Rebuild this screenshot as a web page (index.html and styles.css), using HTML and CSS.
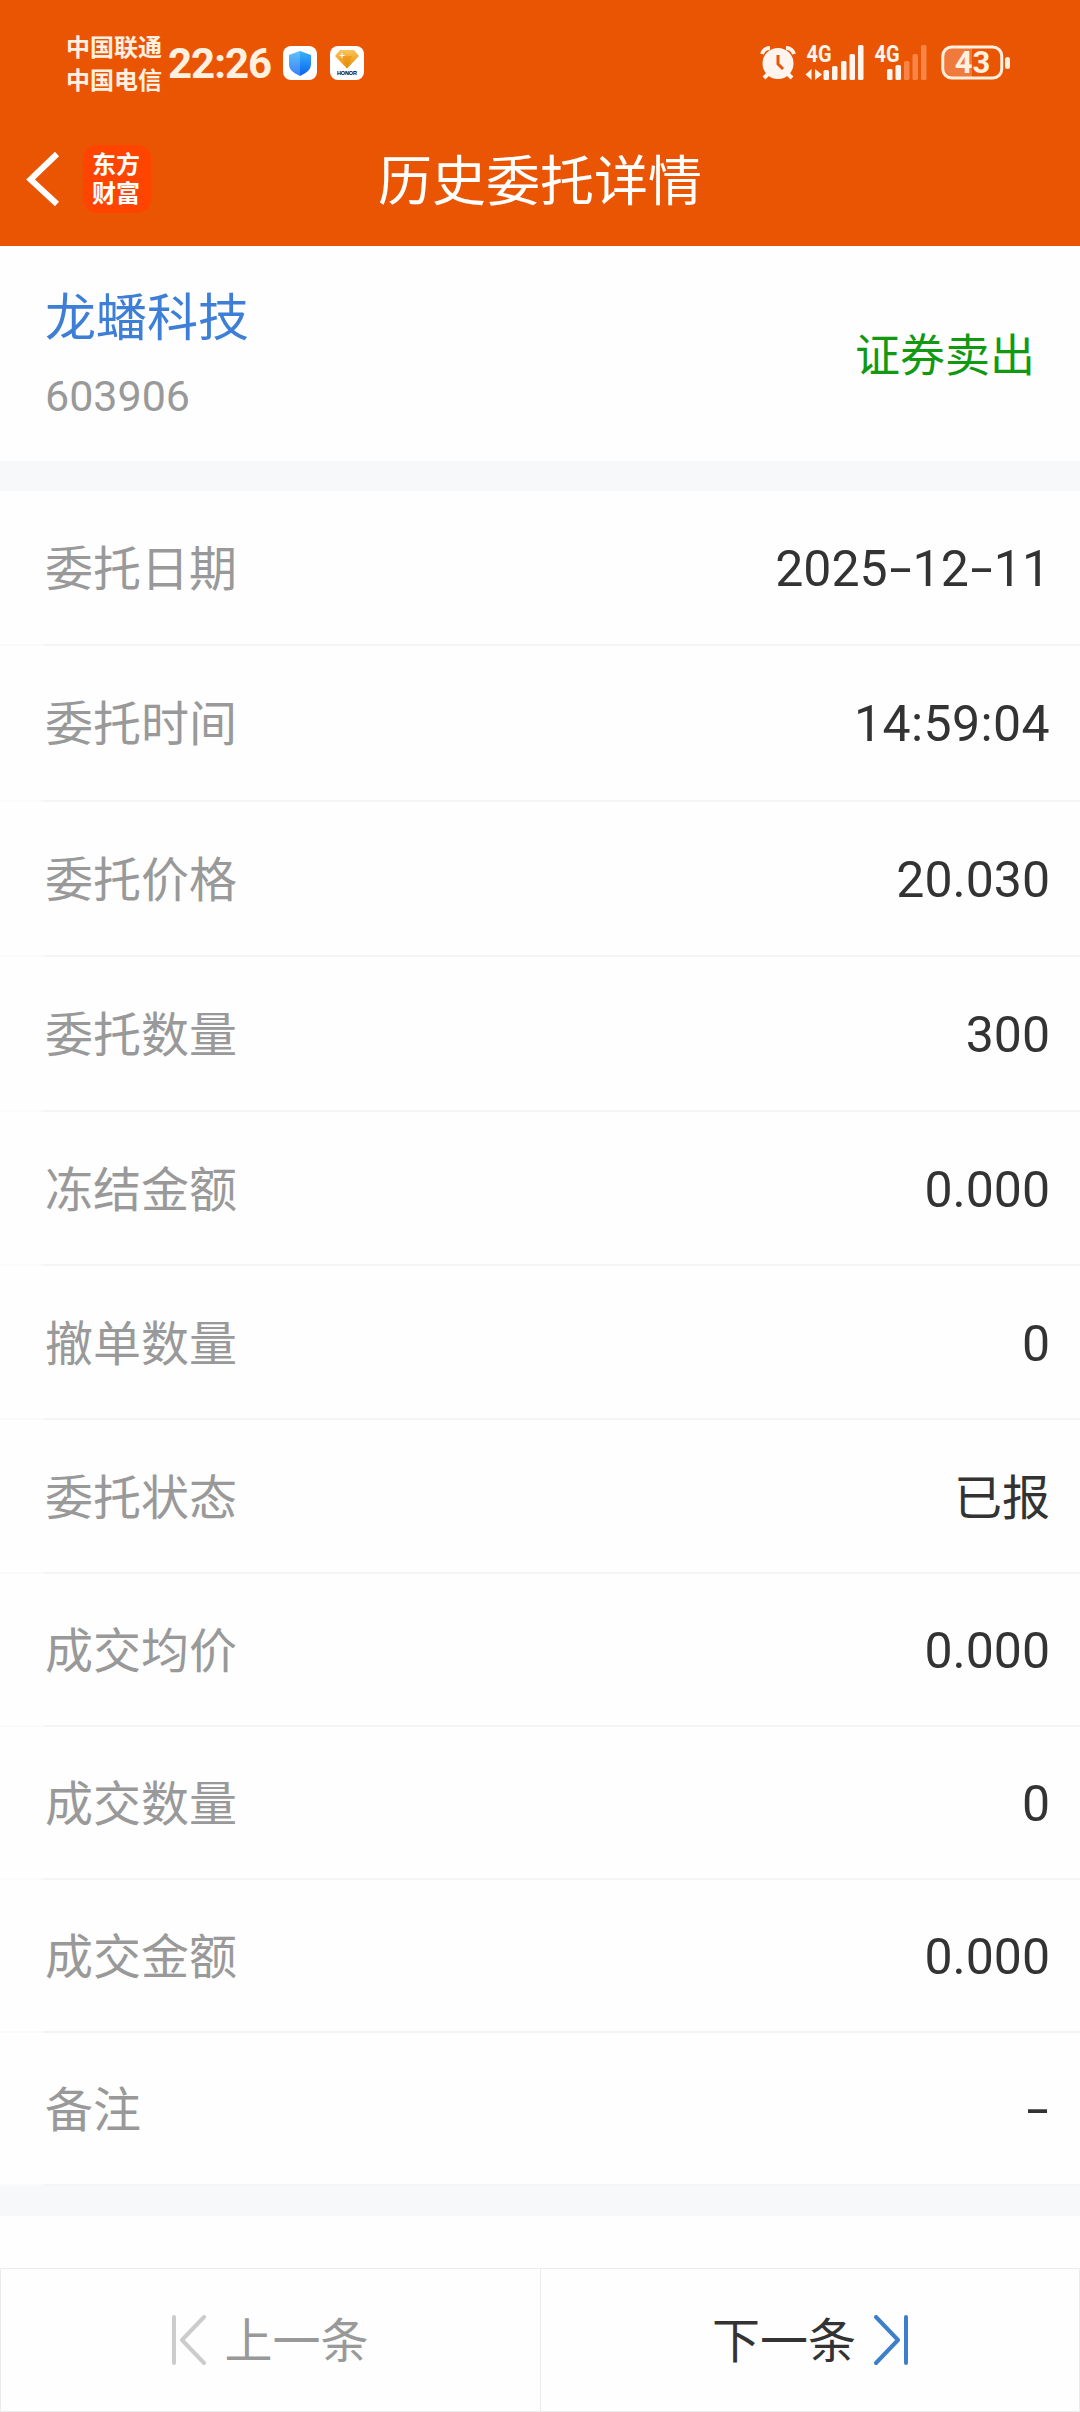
FILE: index.html
```html
<!DOCTYPE html>
<html lang="zh-CN">

<head>
  <meta charset="UTF-8" />
  <meta name="viewport" content="width=device-width, initial-scale=1.0">
  <title>历史委托详情</title>
  <link rel="stylesheet" href="styles.css">
</head>

<body>
  <header class="header">
    <div class="statusbar">
      <div class="carriers">
        <span>中国联通</span>
        <span>中国电信</span>
      </div>
      <span class="clock">22:26</span>
      <svg class="app-icon" viewBox="0 0 34 34">
        <defs>
          <linearGradient id="shield" x1="0" y1="0" x2="0" y2="1">
            <stop offset="0" stop-color="#38b2f8" />
            <stop offset="1" stop-color="#0a62f5" />
          </linearGradient>
        </defs>
        <rect width="34" height="34" rx="8" fill="#fff" />
        <path d="M17 5l11 4v9c0 6-5 9-11 12C11 27 6 24 6 18V9z" fill="url(#shield)" />
        <path d="M17 5v25C11 27 6 24 6 18V9z" fill="#fff" opacity=".2" />
      </svg>
      <svg class="app-icon" viewBox="0 0 34 34">
        <defs>
          <linearGradient id="gem" x1="0" y1="0" x2="0" y2="1">
            <stop offset="0" stop-color="#fbc45a" />
            <stop offset="1" stop-color="#e88a05" />
          </linearGradient>
        </defs>
        <rect width="34" height="34" rx="8" fill="#fff" />
        <path d="M10 4h14l5 6-12 12.500L5 10z" fill="url(#gem)" />
        <path d="M12 10h10l-5 12z" fill="#e88c05" opacity=".5" />
        <path d="M12 7v5M9.500 9.500h5" stroke="#fff" stroke-width="1" />
        <text class="honor" x="17" y="28.500" text-anchor="middle" textLength="20">HONOR</text>
      </svg>
      <div class="status-right">
        <svg class="alarm" viewBox="0 0 36 36">
          <circle cx="18" cy="18.500" r="15.500" fill="#fff5ee" />
          <path d="M2 9a8 8 0 0 1 8-6M34 9a8 8 0 0 0-8-6" fill="none" stroke="#fff5ee" stroke-width="4" />
          <path d="M8 29l-4 4M28 29l4 4" stroke="#fff5ee" stroke-width="4" />
          <path d="M18 10v9l5 5" fill="none" stroke="#ea5504" stroke-width="3" />
        </svg>
        <svg class="signal" viewBox="0 0 60 36">
          <text class="net" x="1.500" y="17" textLength="25" lengthAdjust="spacingAndGlyphs">4G</text>
          <path d="M6.500 24v11l-6-5.500zM10 24v11l7-5.500z" fill="#fff5ee" />
          <g fill="#fff5ee">
            <rect x="18.500" y="25" width="5.500" height="10" rx="1.500" />
            <rect x="27" y="21" width="5.500" height="14" rx="1.500" />
            <rect x="36" y="16" width="5.500" height="19" rx="1.500" />
            <rect x="44.500" y="9" width="5.500" height="26" rx="1.500" />
            <rect x="53" y="0" width="5.500" height="35" rx="1.500" />
          </g>
        </svg>
        <svg class="signal" viewBox="0 0 60 36">
          <text class="net" x="1.500" y="17" textLength="25" lengthAdjust="spacingAndGlyphs">4G</text>
          <g fill="#fff5ee">
            <rect x="14" y="24" width="5.500" height="11" rx="1.500" />
            <rect x="22.500" y="20" width="5.500" height="15" rx="1.500" />
          </g>
          <g fill="#f88446">
            <rect x="31" y="16" width="5.500" height="19" rx="1.500" />
            <rect x="39.500" y="9" width="5.500" height="26" rx="1.500" />
            <rect x="48" y="0" width="5.500" height="35" rx="1.500" />
          </g>
        </svg>
        <svg class="battery" viewBox="0 0 70 36">
          <path d="M31 2H11a9 9 0 0 0-9 9v13a9 9 0 0 0 9 9h20z" fill="#f07a3c" />
          <rect x="1.750" y="2" width="59" height="31" rx="9" fill="none" stroke="#fff0e0" stroke-width="3" />
          <rect x="64" y="12" width="5" height="12" rx="2.500" fill="#fff0e0" />
          <text class="battery-level" x="31.500" y="28" text-anchor="middle">43</text>
        </svg>
      </div>
    </div>
    <div class="titlebar">
      <svg class="back" viewBox="0 0 34 56">
        <path d="M31 3L4.500 28.500L31 53" fill="none" stroke="#fff" stroke-width="6" />
      </svg>
      <div class="logo">东方<br>财富</div>
      <h1>历史委托详情</h1>
    </div>
  </header>

  <section class="stock">
    <div>
      <h2>龙蟠科技</h2>
      <p class="code">603906</p>
    </div>
    <span class="side">证券卖出</span>
  </section>

  <ul class="details">
    <li><span class="label">委托日期</span><span class="value">2025<span class="dash">-</span>12<span class="dash">-</span>11</span></li>
    <li><span class="label">委托时间</span><span class="value time">14:59:04</span></li>
    <li><span class="label">委托价格</span><span class="value">20.030</span></li>
    <li><span class="label">委托数量</span><span class="value">300</span></li>
    <li><span class="label">冻结金额</span><span class="value">0.000</span></li>
    <li><span class="label">撤单数量</span><span class="value">0</span></li>
    <li><span class="label">委托状态</span><span class="value text">已报</span></li>
    <li><span class="label">成交均价</span><span class="value">0.000</span></li>
    <li><span class="label">成交数量</span><span class="value">0</span></li>
    <li><span class="label">成交金额</span><span class="value">0.000</span></li>
    <li><span class="label">备注</span><span class="value"><span class="dash">-</span></span></li>
  </ul>

  <nav class="pager">
    <button class="prev" disabled>
      <svg class="arrow" viewBox="0 0 34 50">
        <path d="M2 2v46M32 2L10 25l22 23" />
      </svg>
      <span>上一条</span>
    </button>
    <button class="next">
      <span>下一条</span>
      <svg class="arrow" viewBox="0 0 34 50">
        <path d="M32 2v46M2 2l22 23L2 48" />
      </svg>
    </button>
  </nav>
</body>

</html>
```
FILE: styles.css
```css
* {
  margin: 0;
  padding: 0;
  box-sizing: border-box;
}

body {
  display: flex;
  flex-direction: column;
  height: 2412px;
  background-color: #fefefe;
  color: #333;
  font-family: "Noto Sans CJK SC", sans-serif;
}

.header {
  height: 246px;
  background-color: #ea5504;
  color: #fff;
}

.statusbar {
  display: flex;
  align-items: center;
  height: 126px;
  padding: 0 69px 0 66px;
  color: #fff0e0;
}

.carriers {
  display: flex;
  flex-direction: column;
  padding-bottom: 3px;
  font-size: 24px;
  font-weight: 700;
  line-height: 33px;
}

.clock {
  width: 108px;
  margin: 0 7px 0 6px;
  font-family: Roboto, sans-serif;
  font-size: 42px;
  font-weight: 700;
  letter-spacing: -1px;
  white-space: nowrap;
}

.app-icon {
  width: 34px;
  height: 34px;
  margin-right: 13px;
}

.honor {
  font: 700 5.500px "Liberation Sans", sans-serif;
}

.status-right {
  display: flex;
  align-items: center;
  margin-left: auto;
}

.alarm {
  width: 36px;
  height: 36px;
  margin-right: 9px;
}

.signal {
  width: 60px;
  height: 36px;
  margin-right: 8px;
  overflow: visible;
}

.net {
  fill: #fff5ee;
  font: 700 23px Roboto, sans-serif;
}

.battery {
  width: 70px;
  height: 36px;
}

.battery-level {
  fill: #fff0e0;
  font: 700 31px Roboto, sans-serif;
}

.titlebar {
  display: grid;
  grid-template-columns: 54px 68px 1fr 148px;
  align-items: center;
  height: 105px;
  padding-left: 26px;
}

.back {
  width: 34px;
  height: 56px;
}

.logo {
  width: 68px;
  height: 68px;
  margin-left: 3px;
  padding: 3px 2px 0 0;
  border-radius: 14px;
  background-color: #ff4400;
  font-size: 24px;
  font-weight: 700;
  line-height: 29px;
  text-align: center;
}

.titlebar h1 {
  padding-bottom: 2px;
  font-size: 54px;
  font-weight: 400;
  text-align: center;
}

.stock {
  display: flex;
  align-items: center;
  justify-content: space-between;
  height: 215px;
  padding: 0 45px 0 45px;
}

.stock h2 {
  color: #3d7fd6;
  font-size: 51px;
  font-weight: 400;
  line-height: 76px;
}

.code {
  padding-top: 9px;
  color: #999;
  font-family: Roboto, sans-serif;
  font-size: 43px;
  line-height: 71px;
}

.side {
  padding-bottom: 3px;
  color: #119911;
  font-size: 45px;
}

.details {
  display: grid;
  grid-template-rows: repeat(4, 155.250px) repeat(3, 154px) repeat(3, 153px) 153px;
  border-top: 30px solid #f6f8fa;
  border-bottom: 30px solid #f6f8fa;
  list-style: none;
}

.details li {
  display: flex;
  align-items: center;
  justify-content: space-between;
  padding: 0 30px 0 45px;
  border-bottom: 2px solid;
  border-image: linear-gradient(to right, #fafafa 45px, #f3f4f5 45px) 1;
}

.label {
  padding-bottom: 5px;
  color: #999;
  font-size: 48px;
}

.value {
  padding-top: 3px;
  font-family: Roboto, sans-serif;
  font-size: 50px;
}

.value.time {
  letter-spacing: 0.4px;
}

.value.text {
  padding: 0 0 4px;
  font-family: "Noto Sans CJK SC", sans-serif;
  font-size: 48px;
}

/* stretched hyphen, as wide as the digits */
.dash {
  display: inline-block;
  width: 25px;
  text-align: center;
  transform: translateY(-1px) scaleX(1.6);
}

.pager {
  display: grid;
  grid-template-columns: 540px 1fr;
  height: 144px;
  margin-top: auto;
  border: 1px solid #ebebeb;
}

.pager button {
  display: flex;
  align-items: center;
  justify-content: center;
  gap: 18px;
  border: none;
  background: none;
  color: #333;
  font-family: inherit;
  font-size: 48px;
}

.pager span {
  padding-bottom: 6px;
}

.pager .prev {
  border-right: 1px solid #ebebeb;
  color: #999;
}

.arrow {
  width: 34px;
  height: 50px;
  fill: none;
  stroke: #3d7fcb;
  stroke-width: 4;
  stroke-linecap: round;
  stroke-linejoin: round;
}

.prev .arrow {
  stroke: #ccc;
}
```
